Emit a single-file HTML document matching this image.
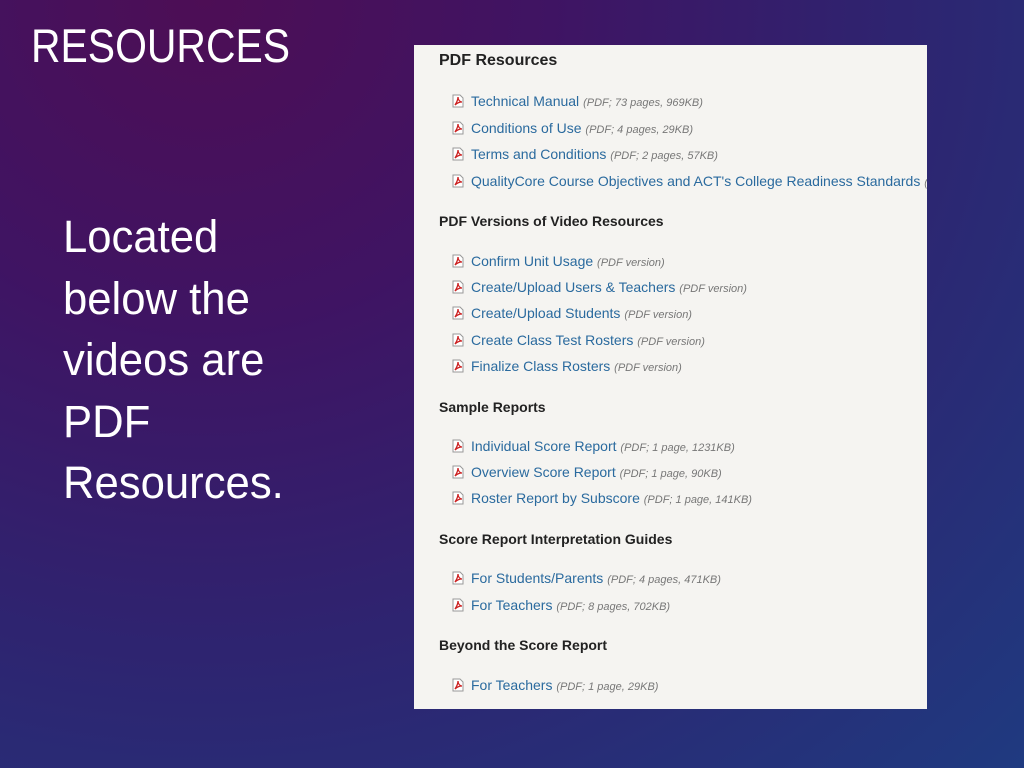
<!DOCTYPE html>
<html><head><meta charset="utf-8"><style>
html,body{margin:0;padding:0;width:1024px;height:768px;overflow:hidden}
body{background:radial-gradient(ellipse at 20% 0%,#4d0e55 0%,#3f1463 30%,#2e2470 60%,#1f3a80 100%);font-family:"Liberation Sans",sans-serif;position:relative}
.t{position:absolute;left:31px;top:18px;color:#fff;font-size:47px;transform:scaleX(.87);transform-origin:left;letter-spacing:0}
.b{position:absolute;left:63px;top:206px;color:#fff;font-size:45px;line-height:61.5px;transform:scaleX(.97);transform-origin:left}
.p{position:absolute;left:414px;top:45px;width:513px;height:664px;background:#f5f4f1;overflow:hidden}
.h{position:absolute;left:25px;font-weight:bold;font-size:14px;color:#222;white-space:nowrap}
.h1{font-size:16px;top:7px}
.l{position:absolute;left:38px;font-size:14px;color:#2a6a9e;white-space:nowrap}
.l i{font-size:11px;color:#777}
.ic{display:inline-block;width:12px;height:14px;vertical-align:-2px;margin-right:7px}
</style></head><body>
<div class="t">RESOURCES</div>
<div class="b">Located<br>below the<br>videos are<br>PDF<br>Resources.</div>
<div class="p">
<div class="h h1">PDF Resources</div>
<div class="l" style="top:48px"><svg class="ic" viewBox="0 0 12 14"><path d="M1 1h7l3 3v9H1z" fill="#fff" stroke="#999" stroke-width="1"/><path d="M3 11c2-3 3-6 3-8 0 3 2 5 4 5-3 0-5 1-7 3z" fill="none" stroke="#c22" stroke-width="1.3"/></svg>Technical Manual <i>(PDF; 73 pages, 969KB)</i></div>
<div class="l" style="top:75px"><svg class="ic" viewBox="0 0 12 14"><path d="M1 1h7l3 3v9H1z" fill="#fff" stroke="#999" stroke-width="1"/><path d="M3 11c2-3 3-6 3-8 0 3 2 5 4 5-3 0-5 1-7 3z" fill="none" stroke="#c22" stroke-width="1.3"/></svg>Conditions of Use <i>(PDF; 4 pages, 29KB)</i></div>
<div class="l" style="top:101px"><svg class="ic" viewBox="0 0 12 14"><path d="M1 1h7l3 3v9H1z" fill="#fff" stroke="#999" stroke-width="1"/><path d="M3 11c2-3 3-6 3-8 0 3 2 5 4 5-3 0-5 1-7 3z" fill="none" stroke="#c22" stroke-width="1.3"/></svg>Terms and Conditions <i>(PDF; 2 pages, 57KB)</i></div>
<div class="l" style="top:128px"><svg class="ic" viewBox="0 0 12 14"><path d="M1 1h7l3 3v9H1z" fill="#fff" stroke="#999" stroke-width="1"/><path d="M3 11c2-3 3-6 3-8 0 3 2 5 4 5-3 0-5 1-7 3z" fill="none" stroke="#c22" stroke-width="1.3"/></svg>QualityCore Course Objectives and ACT's College Readiness Standards <i>(PDF)</i></div>
<div class="h" style="top:168px">PDF Versions of Video Resources</div>
<div class="l" style="top:208px"><svg class="ic" viewBox="0 0 12 14"><path d="M1 1h7l3 3v9H1z" fill="#fff" stroke="#999" stroke-width="1"/><path d="M3 11c2-3 3-6 3-8 0 3 2 5 4 5-3 0-5 1-7 3z" fill="none" stroke="#c22" stroke-width="1.3"/></svg>Confirm Unit Usage <i>(PDF version)</i></div>
<div class="l" style="top:234px"><svg class="ic" viewBox="0 0 12 14"><path d="M1 1h7l3 3v9H1z" fill="#fff" stroke="#999" stroke-width="1"/><path d="M3 11c2-3 3-6 3-8 0 3 2 5 4 5-3 0-5 1-7 3z" fill="none" stroke="#c22" stroke-width="1.3"/></svg>Create/Upload Users &amp; Teachers <i>(PDF version)</i></div>
<div class="l" style="top:260px"><svg class="ic" viewBox="0 0 12 14"><path d="M1 1h7l3 3v9H1z" fill="#fff" stroke="#999" stroke-width="1"/><path d="M3 11c2-3 3-6 3-8 0 3 2 5 4 5-3 0-5 1-7 3z" fill="none" stroke="#c22" stroke-width="1.3"/></svg>Create/Upload Students <i>(PDF version)</i></div>
<div class="l" style="top:287px"><svg class="ic" viewBox="0 0 12 14"><path d="M1 1h7l3 3v9H1z" fill="#fff" stroke="#999" stroke-width="1"/><path d="M3 11c2-3 3-6 3-8 0 3 2 5 4 5-3 0-5 1-7 3z" fill="none" stroke="#c22" stroke-width="1.3"/></svg>Create Class Test Rosters <i>(PDF version)</i></div>
<div class="l" style="top:313px"><svg class="ic" viewBox="0 0 12 14"><path d="M1 1h7l3 3v9H1z" fill="#fff" stroke="#999" stroke-width="1"/><path d="M3 11c2-3 3-6 3-8 0 3 2 5 4 5-3 0-5 1-7 3z" fill="none" stroke="#c22" stroke-width="1.3"/></svg>Finalize Class Rosters <i>(PDF version)</i></div>
<div class="h" style="top:354px">Sample Reports</div>
<div class="l" style="top:393px"><svg class="ic" viewBox="0 0 12 14"><path d="M1 1h7l3 3v9H1z" fill="#fff" stroke="#999" stroke-width="1"/><path d="M3 11c2-3 3-6 3-8 0 3 2 5 4 5-3 0-5 1-7 3z" fill="none" stroke="#c22" stroke-width="1.3"/></svg>Individual Score Report <i>(PDF; 1 page, 1231KB)</i></div>
<div class="l" style="top:419px"><svg class="ic" viewBox="0 0 12 14"><path d="M1 1h7l3 3v9H1z" fill="#fff" stroke="#999" stroke-width="1"/><path d="M3 11c2-3 3-6 3-8 0 3 2 5 4 5-3 0-5 1-7 3z" fill="none" stroke="#c22" stroke-width="1.3"/></svg>Overview Score Report <i>(PDF; 1 page, 90KB)</i></div>
<div class="l" style="top:445px"><svg class="ic" viewBox="0 0 12 14"><path d="M1 1h7l3 3v9H1z" fill="#fff" stroke="#999" stroke-width="1"/><path d="M3 11c2-3 3-6 3-8 0 3 2 5 4 5-3 0-5 1-7 3z" fill="none" stroke="#c22" stroke-width="1.3"/></svg>Roster Report by Subscore <i>(PDF; 1 page, 141KB)</i></div>
<div class="h" style="top:486px">Score Report Interpretation Guides</div>
<div class="l" style="top:525px"><svg class="ic" viewBox="0 0 12 14"><path d="M1 1h7l3 3v9H1z" fill="#fff" stroke="#999" stroke-width="1"/><path d="M3 11c2-3 3-6 3-8 0 3 2 5 4 5-3 0-5 1-7 3z" fill="none" stroke="#c22" stroke-width="1.3"/></svg>For Students/Parents <i>(PDF; 4 pages, 471KB)</i></div>
<div class="l" style="top:552px"><svg class="ic" viewBox="0 0 12 14"><path d="M1 1h7l3 3v9H1z" fill="#fff" stroke="#999" stroke-width="1"/><path d="M3 11c2-3 3-6 3-8 0 3 2 5 4 5-3 0-5 1-7 3z" fill="none" stroke="#c22" stroke-width="1.3"/></svg>For Teachers <i>(PDF; 8 pages, 702KB)</i></div>
<div class="h" style="top:592px">Beyond the Score Report</div>
<div class="l" style="top:632px"><svg class="ic" viewBox="0 0 12 14"><path d="M1 1h7l3 3v9H1z" fill="#fff" stroke="#999" stroke-width="1"/><path d="M3 11c2-3 3-6 3-8 0 3 2 5 4 5-3 0-5 1-7 3z" fill="none" stroke="#c22" stroke-width="1.3"/></svg>For Teachers <i>(PDF; 1 page, 29KB)</i></div>
</div>
</body></html>
